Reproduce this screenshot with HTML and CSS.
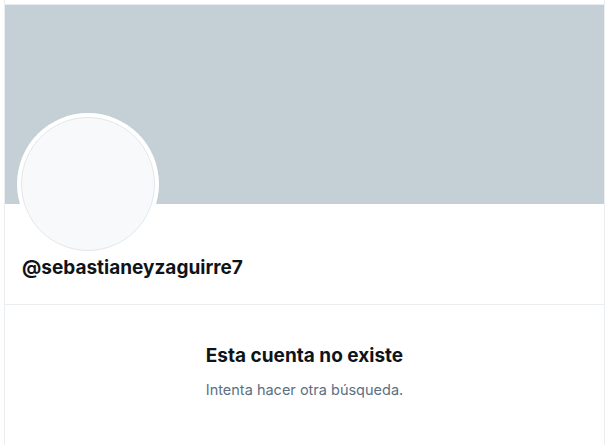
FILE: index.html
```html
<!DOCTYPE html>
<html lang="es">
<head>
    <meta charset="UTF-8">
    <meta name="viewport" content="width=device-width, initial-scale=1.0">
    <title>Perfil</title>
    <link rel="stylesheet" href="styles.css">
</head>
<body>

    <div class="column">
        <div class="banner"></div>

        <div class="profile">
            <div class="avatar">
                <div class="avatar-inner"></div>
            </div>
            <div class="handle">@sebastianeyzaguirre7</div>
        </div>

        <div class="empty">
            <h2>Esta cuenta no existe</h2>
            <p>Intenta hacer otra búsqueda.</p>
        </div>
    </div>

</body>
</html>
```

FILE: styles.css
```css
body {
    margin: 0;
    font-family: 'Inter', 'Liberation Sans', sans-serif;
    background: #fff;
    color: #0f1419;
}

.column {
    width: 601px;
    min-height: 445px;
    margin-left: 4px;
    box-sizing: border-box;
    border-left: 1px solid #ebeef0;
    border-right: 1px solid #ebeef0;
    padding-top: 4px;
}

.banner {
    height: 199px;
    background: #c4cfd6;
    border-top: 1px solid #e6ecf0;
}

.profile {
    display: flow-root;
    padding: 0 16px 24px 12px;
    border-bottom: 1px solid #ebeef0;
}

/* avatar sits half over the banner */
.avatar {
    width: 142px;
    height: 142px;
    margin-top: -91px;
    border-radius: 50%;
    background: #fff;
    padding: 4px;
    box-sizing: border-box;
}

.avatar-inner {
    width: 100%;
    height: 100%;
    border-radius: 50%;
    background: #f7f9fa;
    border: 1px solid #e1e8ed;
    box-sizing: border-box;
}

.handle {
    margin-top: 0;
    padding-left: 5px;
    font-size: 19px;
    font-weight: 700;
    line-height: 25px;
}

.empty {
    text-align: center;
    padding-top: 38px;
}

.empty h2 {
    margin: 0;
    font-size: 19px;
    font-weight: 700;
    line-height: 25px;
}

.empty p {
    margin: 13px 0 0;
    font-size: 14.5px;
    line-height: 18px;
    color: #5b7083;
}
```
